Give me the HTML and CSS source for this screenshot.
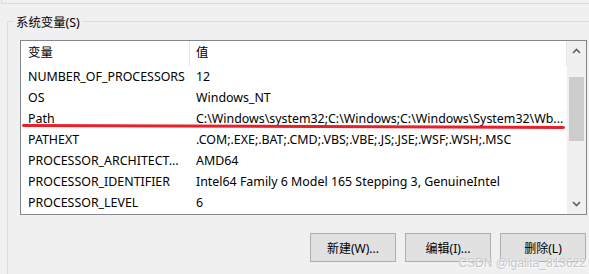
FILE: index.html
```html
<!DOCTYPE html>
<html lang="zh-CN">
<head>
    <meta charset="UTF-8">
    <meta name="viewport" content="width=device-width, initial-scale=1.0">
    <title>系统变量</title>
    <link rel="stylesheet" href="styles.css">
</head>
<body>
    <div class="prev-group"></div>

    <div class="group">
        <span class="group-label">系统变量(S)</span>

        <div class="listbox">
            <div class="list">
                <div class="row header">
                    <div class="cell name">变量</div>
                    <div class="cell value">值</div>
                </div>
                <div class="row">
                    <div class="cell name">NUMBER_OF_PROCESSORS</div>
                    <div class="cell value">12</div>
                </div>
                <div class="row">
                    <div class="cell name">OS</div>
                    <div class="cell value">Windows_NT</div>
                </div>
                <div class="row">
                    <div class="cell name">Path</div>
                    <div class="cell value">C:\Windows\system32;C:\Windows;C:\Windows\System32\Wb...</div>
                </div>
                <div class="row">
                    <div class="cell name">PATHEXT</div>
                    <div class="cell value">.COM;.EXE;.BAT;.CMD;.VBS;.VBE;.JS;.JSE;.WSF;.WSH;.MSC</div>
                </div>
                <div class="row">
                    <div class="cell name">PROCESSOR_ARCHITECT...</div>
                    <div class="cell value">AMD64</div>
                </div>
                <div class="row">
                    <div class="cell name">PROCESSOR_IDENTIFIER</div>
                    <div class="cell value">Intel64 Family 6 Model 165 Stepping 3, GenuineIntel</div>
                </div>
                <div class="row">
                    <div class="cell name">PROCESSOR_LEVEL</div>
                    <div class="cell value">6</div>
                </div>
            </div>

            <div class="scrollbar">
                <div class="arrow">
                    <svg width="9" height="6" viewBox="0 0 9 6"><path d="M1 5 L4.5 1.5 L8 5" fill="none" stroke="#606060" stroke-width="1.6"/></svg>
                </div>
                <div class="track">
                    <div class="thumb"></div>
                </div>
                <div class="arrow">
                    <svg width="9" height="6" viewBox="0 0 9 6"><path d="M1 1 L4.5 4.5 L8 1" fill="none" stroke="#606060" stroke-width="1.6"/></svg>
                </div>
            </div>

            <div class="mark"></div>
        </div>

        <div class="buttons">
            <button class="btn">新建(W)...</button>
            <button class="btn">编辑(I)...</button>
            <button class="btn">删除(L)</button>
        </div>
    </div>

    <div class="watermark">CSDN @lgalita_813622</div>
</body>
</html>
```

FILE: styles.css
```css
body {
    margin: 0;
    width: 589px;
    height: 274px;
    overflow: hidden;
    position: relative;
    background: #f0f0f0;
    color: #000;
    font-family: "Noto Sans", "Noto Sans CJK SC", sans-serif;
    font-size: 12.4px;
}

.prev-group {
    height: 3px;
    margin-left: 1px;
    border-left: 1px solid #dcdcdc;
    border-bottom: 1px solid #dcdcdc;
}

.group {
    position: relative;
    margin-top: 17px;
    margin-left: 7px;
    height: 260px;
    border-top: 1px solid #dcdcdc;
    border-left: 1px solid #dcdcdc;
}

.group-label {
    position: absolute;
    top: -8px;
    left: 6px;
    padding: 0 2px;
    background: #f0f0f0;
    line-height: 18px;
}

.listbox {
    position: relative;
    display: flex;
    width: 565px;
    height: 173px;
    margin-top: 18px;
    margin-left: 12px;
    border: 1px solid #828790;
    background: #fff;
}

.list {
    flex: 1;
    min-width: 0;
}

.row {
    display: flex;
    height: 21px;
    line-height: 21px;
}

.row.header {
    height: 25px;
    line-height: 24px;
}

.row.header .cell {
    border-right: 1px solid #e5e5e5;
}

.cell {
    padding: 0 4px 0 7px;
    white-space: nowrap;
    overflow: hidden;
    box-sizing: border-box;
}

.cell.name {
    width: 169px;
}

.cell.value {
    flex: 1;
    min-width: 0;
    padding-left: 6px;
}

.scrollbar {
    width: 19px;
    display: flex;
    flex-direction: column;
    background: #f0f0f0;
}

.arrow {
    height: 20px;
    display: flex;
    align-items: center;
    justify-content: center;
}

.track {
    flex: 1;
    padding-top: 16px;
}

.thumb {
    height: 64px;
    margin: 0 2px;
    background: #cdcdcd;
}

.mark {
    position: absolute;
    left: 1px;
    top: 84px;
    width: 543px;
    height: 3px;
    border-radius: 2px;
    background: #e8202a;
    transform: rotate(0.2deg);
}

.buttons {
    display: flex;
    justify-content: flex-end;
    gap: 9px;
    margin-top: 18px;
    width: 578px;
}

.btn {
    width: 86px;
    height: 29px;
    padding: 0;
    border: 1px solid #adadad;
    background: #e1e1e1;
    color: #000;
    font-family: "Noto Sans", "Noto Sans CJK SC", sans-serif;
    font-size: 12px;
}

.watermark {
    position: absolute;
    right: 3px;
    bottom: 4px;
    color: #c4c4c4;
    font-family: "Liberation Sans", sans-serif;
    font-size: 12px;
    text-shadow: 0 0 1px #fff, 1px 1px 0 #fafafa;
}
```
